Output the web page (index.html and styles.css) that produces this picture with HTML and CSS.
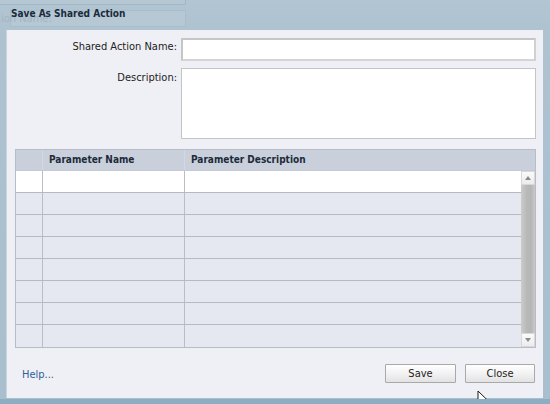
FILE: index.html
```html
<!DOCTYPE html>
<html>
<head>
<meta charset="utf-8">
<link rel="stylesheet" href="styles.css">
</head>
<body>
<div class="screen">
  <div class="ghost ghost-a"></div>
  <div class="ghost ghost-b"></div>
  <div class="ghost ghost-t">ion Name:</div>
  <div class="titlebar">Save As Shared Action</div>
  <div class="panel">
    <div class="form-row">
      <label class="label">Shared Action Name:</label>
      <div class="input"></div>
    </div>
    <div class="form-row">
      <label class="label">Description:</label>
      <div class="textarea"></div>
    </div>
    <div class="grid">
      <div class="grid-head">
        <div class="c1"></div>
        <div class="c2">Parameter Name</div>
        <div class="c3">Parameter Description</div>
      </div>
      <div class="grid-body">
        <div class="rows">
          <div class="row first"><div class="c1"></div><div class="c2"></div><div class="c3"></div></div>
          <div class="row"><div class="c1"></div><div class="c2"></div><div class="c3"></div></div>
          <div class="row"><div class="c1"></div><div class="c2"></div><div class="c3"></div></div>
          <div class="row"><div class="c1"></div><div class="c2"></div><div class="c3"></div></div>
          <div class="row"><div class="c1"></div><div class="c2"></div><div class="c3"></div></div>
          <div class="row"><div class="c1"></div><div class="c2"></div><div class="c3"></div></div>
          <div class="row"><div class="c1"></div><div class="c2"></div><div class="c3"></div></div>
          <div class="row last"><div class="c1"></div><div class="c2"></div><div class="c3"></div></div>
        </div>
        <div class="scrollbar">
          <div class="sb-btn"><svg width="6" height="4" viewBox="0 0 6 4"><path d="M0 4 L3 0 L6 4 Z" fill="#8a8a8a"/></svg></div>
          <div class="sb-track"></div>
          <div class="sb-btn"><svg width="6" height="4" viewBox="0 0 6 4"><path d="M0 0 L6 0 L3 4 Z" fill="#8a8a8a"/></svg></div>
        </div>
      </div>
    </div>
    <div class="footer">
      <a class="help">Help...</a>
      <div class="buttons">
        <button class="btn save">Save</button>
        <button class="btn close">Close</button>
      </div>
    </div>
  </div>
  <svg class="cursor" width="14" height="16" viewBox="0 0 14 16">
    <path d="M1 1 L1 14 L4 11 L6.5 15.5 L8.5 14.5 L6.2 10.2 L10.5 10.2 Z" fill="#ffffff" stroke="#1a1a1a" stroke-width="1" stroke-linejoin="round"/>
  </svg>
</div>
</body>
</html>
```
FILE: styles.css
```css
html, body {
  margin: 0;
  padding: 0;
}
body {
  width: 550px;
  height: 404px;
  overflow: hidden;
  background: #adc1cf;
  font-family: "DejaVu Sans Condensed", "DejaVu Sans", sans-serif;
  font-stretch: condensed;
}
.screen {
  position: relative;
  width: 550px;
  height: 404px;
  display: flex;
  flex-direction: column;
  background: linear-gradient(#b2c5d2, #aec2d0 30px, #a9bfce);
  box-sizing: border-box;
}
.ghost {
  position: absolute;
  box-sizing: border-box;
}
.ghost-a {
  left: -2px;
  top: -4px;
  width: 188px;
  height: 9px;
  border: 1px solid #a3b8c6;
  background: #b4c7d3;
}
.ghost-b {
  left: 10px;
  top: 10px;
  width: 176px;
  height: 17px;
  border: 1px solid #a9bdcb;
  background: #b5c8d4;
}
.ghost-t {
  left: 1px;
  top: 13px;
  color: #a2b6c4;
  font-size: 11px;
  line-height: 12px;
}
.titlebar {
  position: relative;
  height: 30px;
  flex: none;
  padding-left: 11px;
  font-size: 10px;
  font-weight: bold;
  line-height: 27px;
  color: #1b2b3b;
}
.panel {
  margin-left: 6px;
  width: 537px;
  height: 368px;
  flex: none;
  box-sizing: border-box;
  background: #eff0f5;
  border-left: 1px solid #c9d4de;
  padding: 8px 0 0 0;
  display: flex;
  flex-direction: column;
}
.form-row {
  display: flex;
  align-items: flex-start;
  margin-bottom: 8px;
}
.label {
  text-align: right;
  padding-right: 4px;
  font-size: 11px;
  color: #222;
  line-height: 16px;
  padding-top: 1px;
  box-sizing: border-box;
  flex: none;
  width: 174px;
}
.input {
  width: 355px;
  height: 23px;
  box-sizing: border-box;
  background: #fff;
  border: 2px solid #c6c6c6;
  border-right-color: #d0d0d0;
  border-bottom-color: #d4d4d4;
}
.textarea {
  width: 355px;
  height: 71px;
  box-sizing: border-box;
  background: #fff;
  border: 1px solid #c4c4c4;
  margin-top: -1px;
}
.grid {
  margin-left: 8px;
  margin-top: 2px;
  width: 521px;
  box-sizing: border-box;
  border: 1px solid #b6bdc8;
}
.grid-head {
  display: flex;
  height: 21px;
  background: #c9d0dc;
  border-bottom: 1px solid #c3cad6;
  box-sizing: border-box;
  font-size: 10px;
  font-weight: bold;
  color: #1c2b3a;
  line-height: 20px;
}
.c1 {
  width: 27px;
  flex: none;
  box-sizing: border-box;
  border-right: 1px solid #b9bec6;
}
.c2 {
  width: 142px;
  flex: none;
  box-sizing: border-box;
  border-right: 1px solid #b9bec6;
  padding-left: 6px;
}
.c3 {
  flex: 1;
  padding-left: 6px;
}
.grid-head .c1, .grid-head .c2 {
  border-right-color: #d3d8e1;
}
.grid-body {
  display: flex;
}
.rows {
  width: 505px;
  flex: none;
}
.row {
  display: flex;
  height: 22px;
  box-sizing: border-box;
  background: #e5e8f0;
  border-bottom: 1px solid #b5b9c1;
}
.row.first {
  background: #ffffff;
}
.row.last {
  border-bottom: 0;
}
.scrollbar {
  width: 14px;
  flex: none;
  display: flex;
  flex-direction: column;
  background: #c2c2c2;
}
.sb-btn {
  height: 14px;
  flex: none;
  background: linear-gradient(#fafafa, #ececec);
  border: 1px solid #d8d8d8;
  box-sizing: border-box;
  display: flex;
  align-items: center;
  justify-content: center;
}
.sb-track {
  flex: 1;
  background: linear-gradient(90deg, #cccccc, #b9b9b9 40%, #b5b5b5 70%, #c9c9c9);
}
.footer {
  display: flex;
  align-items: center;
  justify-content: space-between;
  margin-top: 16px;
  padding-left: 15px;
  padding-right: 8px;
}
.help {
  font-size: 11px;
  color: #2f5f98;
  padding-top: 2px;
}
.buttons {
  display: flex;
  gap: 9px;
}
.btn {
  height: 19px;
  box-sizing: border-box;
  border: 1px solid #a9a9a9;
  border-radius: 1px;
  background: linear-gradient(#ffffff, #f2f2f2 50%, #e2e2e2);
  font-family: "DejaVu Sans Condensed", "DejaVu Sans", sans-serif;
  font-stretch: condensed;
  font-size: 11px;
  color: #222;
  padding: 0;
  line-height: 16px;
}
.btn.save {
  width: 71px;
}
.btn.close {
  width: 70px;
}
.cursor {
  position: absolute;
  left: 477px;
  top: 390px;
}
.screen::after {
  content: "";
  position: absolute;
  left: 0;
  right: 0;
  bottom: 0;
  height: 5px;
  background: #8fadc2;
}
```
